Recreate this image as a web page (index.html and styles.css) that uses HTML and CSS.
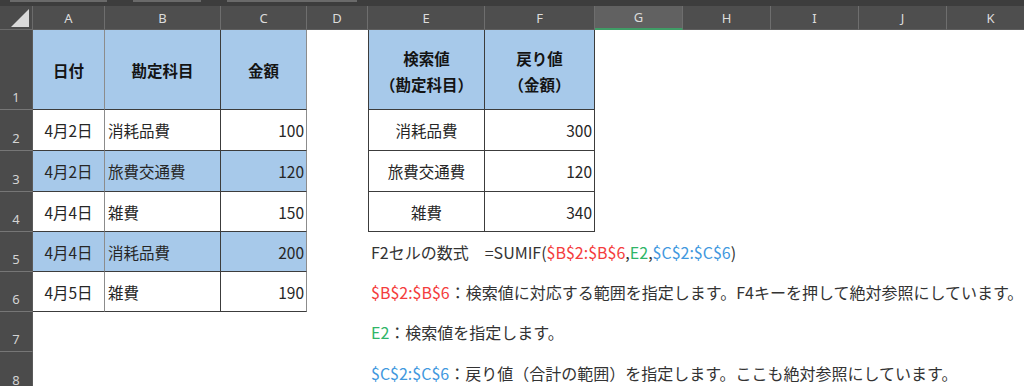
FILE: index.html
```html
<!DOCTYPE html>
<html lang="ja">
<head>
<meta charset="utf-8">
<title>SUMIF</title>
<link rel="stylesheet" href="styles.css">
</head>
<body>
<div class="topbar">
  <span class="tab tab-a"></span>
  <span class="tab tab-b"></span>
  <span class="tab tab-c"></span>
</div>
<div class="sheet">
  <!-- column headers -->
  <div class="corner">
    <svg width="20" height="20" viewBox="0 0 20 20"><polygon points="19,1 19,19 1,19" fill="#d9d9d9"/></svg>
  </div>
  <div class="colhead">A</div>
  <div class="colhead">B</div>
  <div class="colhead">C</div>
  <div class="colhead">D</div>
  <div class="colhead">E</div>
  <div class="colhead">F</div>
  <div class="colhead selected">G</div>
  <div class="colhead">H</div>
  <div class="colhead">I</div>
  <div class="colhead">J</div>
  <div class="colhead">K</div>

  <!-- row 1 -->
  <div class="rowhead">1</div>
  <div class="cell t hl th mid">日付</div>
  <div class="cell t hl th">勘定科目</div>
  <div class="cell t hl th edge">金額</div>
  <div class="cell"></div>
  <div class="cell t hl th lead two">検索値<br>（勘定科目）</div>
  <div class="cell t hl th two">戻り値<br>（金額）</div>
  <div class="cell rest"></div>

  <!-- row 2 -->
  <div class="rowhead">2</div>
  <div class="cell t c-date mid">4月2日</div>
  <div class="cell t c-name">消耗品費</div>
  <div class="cell t c-num edge">100</div>
  <div class="cell"></div>
  <div class="cell t lead c-center">消耗品費</div>
  <div class="cell t c-num">300</div>
  <div class="cell rest"></div>

  <!-- row 3 -->
  <div class="rowhead">3</div>
  <div class="cell t hl c-date mid">4月2日</div>
  <div class="cell t hl c-name">旅費交通費</div>
  <div class="cell t hl c-num edge">120</div>
  <div class="cell"></div>
  <div class="cell t lead c-center">旅費交通費</div>
  <div class="cell t c-num">120</div>
  <div class="cell rest"></div>

  <!-- row 4 -->
  <div class="rowhead">4</div>
  <div class="cell t c-date mid">4月4日</div>
  <div class="cell t c-name">雑費</div>
  <div class="cell t c-num edge">150</div>
  <div class="cell"></div>
  <div class="cell t lead c-center">雑費</div>
  <div class="cell t c-num">340</div>
  <div class="cell rest"></div>

  <!-- row 5 -->
  <div class="rowhead">5</div>
  <div class="cell t hl c-date mid">4月4日</div>
  <div class="cell t hl c-name">消耗品費</div>
  <div class="cell t hl c-num edge">200</div>
  <div class="cell"></div>
  <div class="cell note">F2セルの数式　=SUMIF(<span class="red">$B$2:$B$6</span>,<span class="green">E2</span>,<span class="blue">$C$2:$C$6</span>)</div>

  <!-- row 6 -->
  <div class="rowhead">6</div>
  <div class="cell t c-date mid">4月5日</div>
  <div class="cell t c-name">雑費</div>
  <div class="cell t c-num edge">190</div>
  <div class="cell"></div>
  <div class="cell note"><span class="red">$B$2:$B$6</span>：検索値に対応する範囲を指定します。F4キーを押して絶対参照にしています。</div>

  <!-- row 7 -->
  <div class="rowhead">7</div>
  <div class="cell"></div>
  <div class="cell"></div>
  <div class="cell"></div>
  <div class="cell"></div>
  <div class="cell note"><span class="green">E2</span>：検索値を指定します。</div>

  <!-- row 8 -->
  <div class="rowhead">8</div>
  <div class="cell"></div>
  <div class="cell"></div>
  <div class="cell"></div>
  <div class="cell"></div>
  <div class="cell note"><span class="blue">$C$2:$C$6</span>：戻り値（合計の範囲）を指定します。ここも絶対参照にしています。</div>
</div>
</body>
</html>
```

FILE: styles.css
```css
* {
  box-sizing: border-box;
}

html,
body {
  margin: 0;
  padding: 0;
  width: 1024px;
  height: 386px;
  overflow: hidden;
  background: #ffffff;
  font-family: "Noto Sans CJK JP", "Noto Sans", sans-serif;
  color: #262626;
}

/* dark strip under the formula bar */
.topbar {
  height: 7px;
  background: #3d3d3d;
  display: flex;
  gap: 26px;
  padding-left: 10px;
  border-bottom: 1px dotted #5a5a5a;
}

.tab {
  height: 2px;
  background: #6a6a6a;
}

.tab-a { width: 97px; }
.tab-b { width: 68px; }
.tab-c { width: 130px; }

/* worksheet grid */
.sheet {
  display: grid;
  grid-template-columns: 33px 72px 116px 86px 61px 117px 110px 88px 88px 88px 88px 88px;
  grid-template-rows: 24px 80px 41px 41px 40px 40px 40px 40px 41px;
  margin-top: -1px;
}

.corner {
  background: #4b4b4b;
  border-right: 1px solid #6b6b6b;
  border-bottom: 1px solid #6b6b6b;
  display: flex;
  align-items: flex-end;
  justify-content: flex-end;
  padding: 0 2px 1px 0;
}

.colhead {
  background: #4e4e4e;
  color: #dcdcdc;
  font-family: "Noto Sans", sans-serif;
  font-size: 13px;
  display: flex;
  align-items: center;
  justify-content: center;
  border-right: 1px solid #6e6e6e;
  border-bottom: 1px solid #5e5e5e;
}

.colhead.selected {
  background: #616161;
  border-bottom: 2px solid #3f9d66;
}

.rowhead {
  background: #4b4b4b;
  color: #d4d4d4;
  font-family: "Noto Sans", sans-serif;
  font-size: 13px;
  display: flex;
  align-items: flex-end;
  justify-content: center;
  padding-bottom: 3px;
  border-bottom: 1px solid #767676;
  border-right: 1px solid #5a5a5a;
}

.cell {
  display: flex;
  align-items: center;
  font-size: 15.5px;
  white-space: nowrap;
  min-width: 0;
}

.rest {
  grid-column: 8 / -1;
}

/* bordered table cells */
.t {
  border-right: 1px solid #3c3c3c;
  border-bottom: 1px solid #3c3c3c;
}

.t.mid {
  border-right-color: #8c8c8c;
}

.t.edge {
  border-right-color: #8c8c8c;
}

.t.lead {
  border-left: 1px solid #3c3c3c;
}

.hl {
  background: #a7c9ea;
}

.th {
  font-weight: 700;
  color: #141414;
  justify-content: center;
  text-align: center;
}

.th.two {
  line-height: 26px;
  padding-top: 2px;
}

.c-date,
.c-center {
  justify-content: center;
}

.c-name {
  padding-left: 3px;
}

.c-num {
  justify-content: flex-end;
  padding-right: 2px;
}

/* formula notes spanning columns E onward */
.note {
  grid-column: 6 / -1;
  font-size: 16px;
  padding-left: 3px;
  color: #333333;
  overflow: visible;
}

.red { color: #f43c3c; }
.green { color: #2fb568; }
.blue { color: #4198de; }
```
